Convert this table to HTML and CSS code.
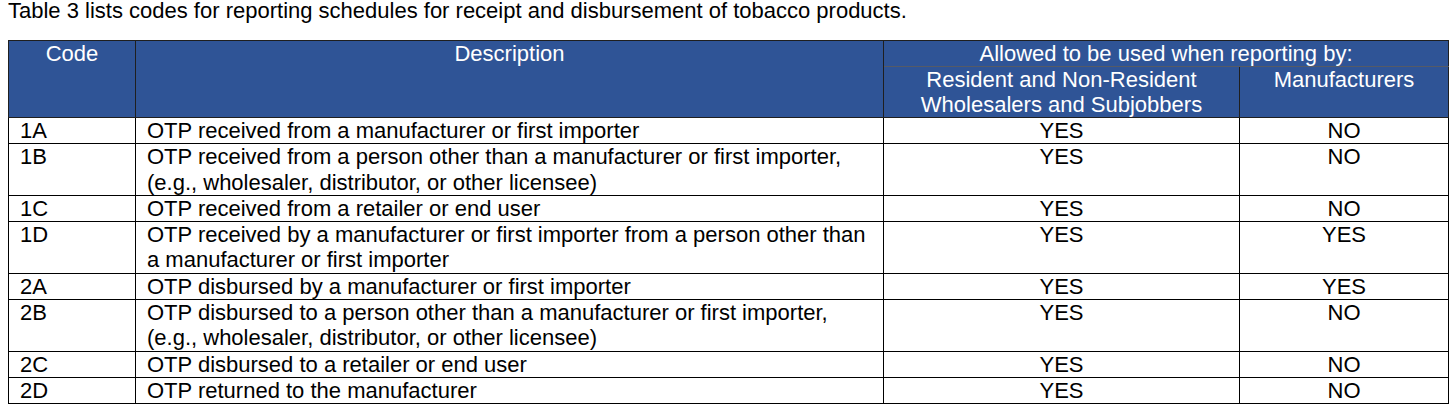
FILE: index.html
```html
<!DOCTYPE html>
<html>
<head>
<meta charset="utf-8">
<link rel="stylesheet" href="styles.css">
</head>
<body>
<p class="intro">Table 3 lists codes for reporting schedules for receipt and disbursement of tobacco products.</p>
<table class="codes">
  <colgroup>
    <col class="c-code">
    <col class="c-desc">
    <col class="c-res">
    <col class="c-man">
  </colgroup>
  <thead>
    <tr>
      <th rowspan="2">Code</th>
      <th rowspan="2">Description</th>
      <th colspan="2" class="group">Allowed to be used when reporting by:</th>
    </tr>
    <tr>
      <th class="sub">Resident and Non-Resident<br>Wholesalers and Subjobbers</th>
      <th class="sub">Manufacturers</th>
    </tr>
  </thead>
  <tbody>
    <tr><td>1A</td><td>OTP received from a manufacturer or first importer</td><td class="yn">YES</td><td class="yn">NO</td></tr>
    <tr><td>1B</td><td>OTP received from a person other than a manufacturer or first importer,<br>(e.g., wholesaler, distributor, or other licensee)</td><td class="yn">YES</td><td class="yn">NO</td></tr>
    <tr><td>1C</td><td>OTP received from a retailer or end user</td><td class="yn">YES</td><td class="yn">NO</td></tr>
    <tr><td>1D</td><td>OTP received by a manufacturer or first importer from a person other than<br>a manufacturer or first importer</td><td class="yn">YES</td><td class="yn">YES</td></tr>
    <tr><td>2A</td><td>OTP disbursed by a manufacturer or first importer</td><td class="yn">YES</td><td class="yn">YES</td></tr>
    <tr><td>2B</td><td>OTP disbursed to a person other than a manufacturer or first importer,<br>(e.g., wholesaler, distributor, or other licensee)</td><td class="yn">YES</td><td class="yn">NO</td></tr>
    <tr><td>2C</td><td>OTP disbursed to a retailer or end user</td><td class="yn">YES</td><td class="yn">NO</td></tr>
    <tr><td>2D</td><td>OTP returned to the manufacturer</td><td class="yn">YES</td><td class="yn">NO</td></tr>
  </tbody>
</table>
</body>
</html>
```
FILE: styles.css
```css
html, body {
  margin: 0;
  padding: 0;
  background: #ffffff;
}
body {
  font-family: "Liberation Sans", Arial, sans-serif;
  font-size: 22px;
  line-height: 25px;
  color: #000000;
}
.intro {
  margin: 0;
  padding: 0 0 0 8px;
  height: 40px;
  line-height: 22px;
}
.codes {
  margin-left: 8px;
  border-collapse: collapse;
  table-layout: fixed;
  width: 1440px;
}
.c-code { width: 127px; }
.c-desc { width: 748px; }
.c-res { width: 356px; }
.c-man { width: 209px; }
.codes th {
  background: #2f5496;
  color: #ffffff;
  font-weight: normal;
  text-align: center;
  vertical-align: top;
  border: 1px solid #1f1f1f;
  padding: 0 6px;
  line-height: 25px;
}
.codes th.group {
  border-bottom: 1px solid #555a66;
  height: 25px;
}
.codes th.sub {
  border-top: 1px solid #555a66;
}
.codes td {
  border: 1px solid #000000;
  padding: 0 6px 0 11px;
  vertical-align: top;
  line-height: 25.3px;
}
.codes td.yn {
  text-align: center;
  padding: 0;
}
```
